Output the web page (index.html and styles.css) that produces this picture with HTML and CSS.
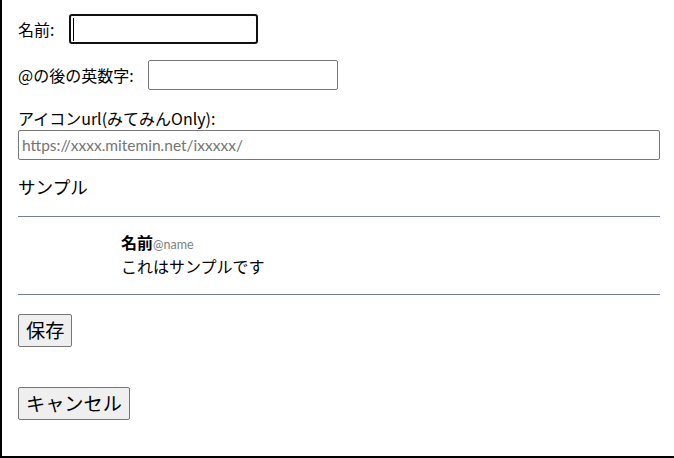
FILE: index.html
```html
<!DOCTYPE html>
<html lang="ja">
<head>
<meta charset="utf-8">
<title>設定</title>
<link rel="stylesheet" href="styles.css">
</head>
<body>
<div class="dialog">
  <div class="row row-name">
    <label class="label" for="name">名前:</label>
    <span class="focus-wrap">
      <input id="name" class="input input-focused" type="text">
      <span class="caret"></span>
    </span>
  </div>
  <div class="row row-id">
    <label class="label" for="uid">@の後の英数字:</label>
    <input id="uid" class="input" type="text">
  </div>
  <div class="block">
    <label class="label" for="icon">アイコンurl(みてみんOnly):</label>
    <input id="icon" class="input input-wide" type="text" placeholder="https://xxxx.mitemin.net/ixxxxx/">
  </div>
  <div class="sample-title">サンプル</div>
  <hr class="rule rule-top">
  <div class="sample">
    <div class="avatar"></div>
    <div class="sample-body">
      <div class="sample-head"><span class="sample-name">名前</span><span class="sample-id">@name</span></div>
      <div class="sample-text">これはサンプルです</div>
    </div>
  </div>
  <hr class="rule rule-bottom">
  <div class="actions">
    <button class="btn" type="button">保存</button>
    <button class="btn" type="button">キャンセル</button>
  </div>
</div>
</body>
</html>
```
FILE: styles.css
```css
html, body {
  margin: 0;
  padding: 0;
  background: #fff;
}
body {
  font-family: "Noto Sans CJK JP", "Noto Sans", sans-serif;
  font-size: 16px;
  color: #000;
}
.dialog {
  box-sizing: border-box;
  width: 674px;
  height: 458px;
  border-left: 2px solid #000;
  border-bottom: 2px solid #000;
  padding: 14px 14px 0 16px;
}
.row {
  display: flex;
  align-items: center;
  height: 30px;
}
.row-name .label {
  width: 51px;
}
.row-id {
  margin-top: 16px;
}
.row-id .label {
  width: 130px;
}
.label {
  line-height: 22px;
  display: block;
}
.input {
  box-sizing: border-box;
  height: 30px;
  width: 190px;
  border: 1px solid #767676;
  border-radius: 2px;
  padding: 0 3px;
  font-family: "Lato", "Noto Sans CJK JP", sans-serif;
  font-size: 15.5px;
  background: #fff;
  outline: none;
  margin: 0;
}
.input-focused {
  border: 2px solid #101010;
  border-radius: 3px;
  width: 189px;
  caret-color: transparent;
}
.focus-wrap {
  position: relative;
  display: block;
  height: 30px;
}
.caret {
  position: absolute;
  left: 4px;
  top: 4px;
  width: 1px;
  height: 23px;
  background: #000;
}
.block {
  margin-top: 17px;
}
.block .label {
  margin-bottom: 1px;
}
.input-wide {
  width: 642px;
  display: block;
}
.input-wide::placeholder {
  color: #757575;
}
.sample-title {
  margin-top: 15px;
  font-size: 17.6px;
  line-height: 24px;
}
.rule {
  border: 0;
  border-top: 1px solid #708090;
  margin: 0;
  width: 642px;
}
.rule-top {
  margin-top: 17px;
}
.sample {
  display: flex;
  padding: 15px 0 16px 0;
}
.avatar {
  width: 103px;
  flex: none;
}
.sample-head {
  line-height: 20px;
  height: 20px;
  white-space: nowrap;
}
.sample-name {
  font-weight: bold;
}
.sample-id {
  font-family: "Lato", "Noto Sans", sans-serif;
  font-size: 12.5px;
  color: #808080;
}
.sample-text {
  margin-top: 2px;
  line-height: 24px;
}
.actions {
  display: flex;
  flex-direction: column;
  align-items: flex-start;
  gap: 40px;
  padding-top: 19px;
}
.btn {
  box-sizing: border-box;
  height: 33px;
  padding: 0 7px;
  font-family: "Noto Sans CJK JP", sans-serif;
  font-size: 19.2px;
  line-height: 31px;
  border: 1px solid #767676;
  border-radius: 2px;
  background: #efefef;
  color: #000;
  margin: 0;
}
```
